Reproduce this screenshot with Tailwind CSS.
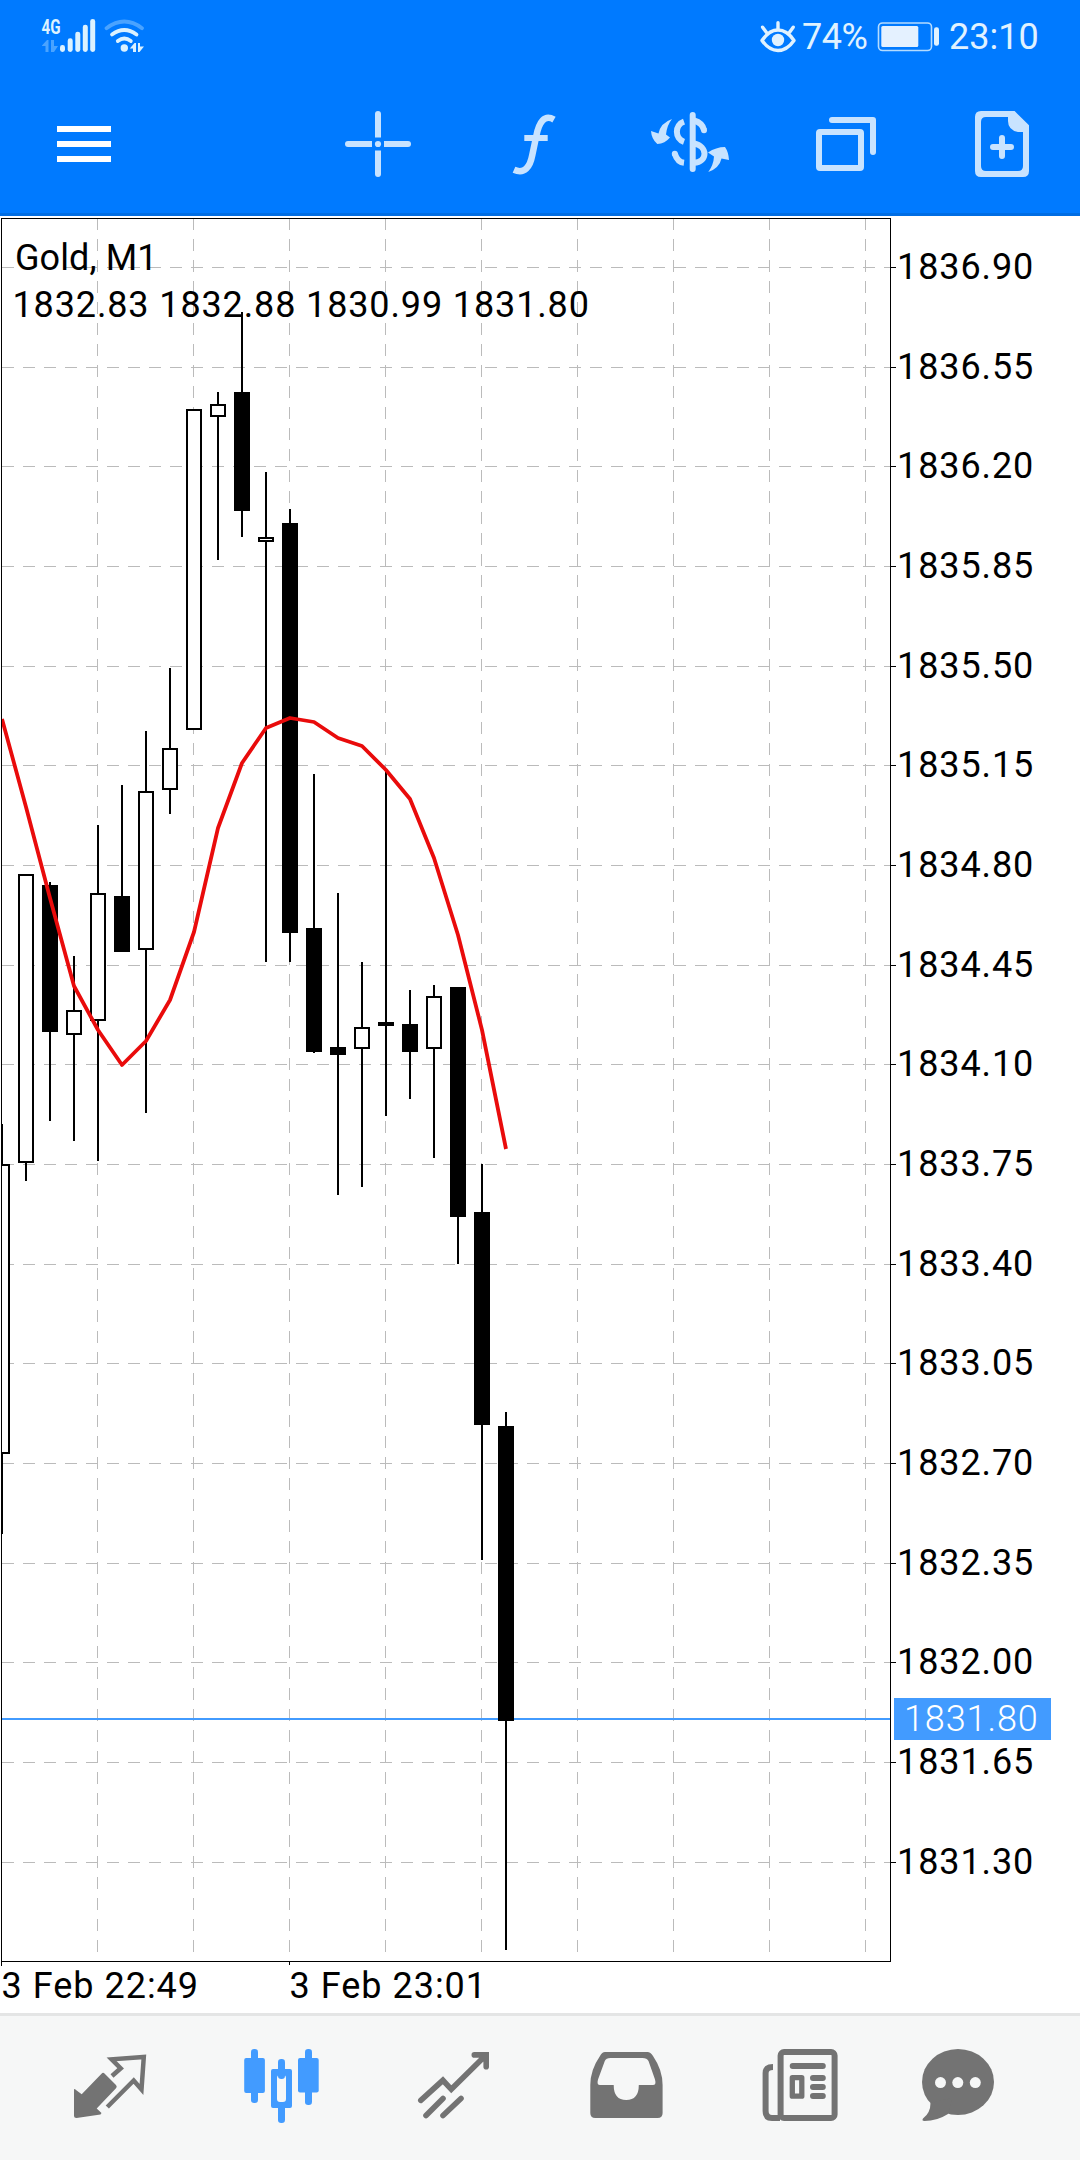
<!DOCTYPE html>
<html lang="en">
<head>
  <meta charset="UTF-8">
  <title>Gold, M1</title>
  <script src="https://cdn.jsdelivr.net/npm/@tailwindcss/browser@4"></script>
</head>
<body class="w-[1080px] h-[2160px] bg-white flex flex-col overflow-hidden font-[Roboto,sans-serif]">

  <!-- Header -->
  <header class="h-[216px] shrink-0 bg-[#007aff] border-b-[3px] border-[#006de3]">

    <!-- Status bar -->
    <div class="h-[72px] pt-4 pl-[38px] flex items-start text-[#e0f2ff] text-4xl leading-[42px]">
      <svg class="w-28 h-10" viewBox="38 16 112 40" fill="#dcf2ff">
        <text x="41.5" y="34" font-size="20.5" font-weight="700" textLength="19" lengthAdjust="spacingAndGlyphs">4G</text>
        <g fill="#4aa3ff">
          <path d="M42 45.5L47 40H48.5V52H45.5V46H42Z"/>
          <path d="M51 40H54V46H58L54 52H51Z"/>
        </g>
        <rect x="60" y="45" width="5" height="7" rx="2.4"/>
        <rect x="67.7" y="38.3" width="5" height="13.7" rx="2.4"/>
        <rect x="75.3" y="31.7" width="5" height="20.3" rx="2.4"/>
        <rect x="82.8" y="24.7" width="5" height="27.3" rx="2.4"/>
        <rect x="90.2" y="19" width="5" height="33" rx="2.4"/>
        <g fill="none" stroke="#dcf2ff" stroke-width="3.8" stroke-linecap="round">
          <path d="M106.5 28.2Q124.3 14.8 142 28.2" stroke="#4aa3ff"/>
          <path d="M112 34.5Q124.3 25.5 136.5 34.5"/>
          <path d="M117.8 41Q124.3 36 130.8 41"/>
        </g>
        <circle cx="124.3" cy="48" r="3.7"/>
        <path d="M129.8 48.5L134.5 43H136V52H133V48.5Z"/>
        <path d="M138 43H140V46.5H144L139.5 52H138Z"/>
      </svg>
      <svg class="w-10 h-10 ml-[608px]" viewBox="758 16 40 40" fill="none" stroke="#e0f2ff" stroke-width="3.4" stroke-linecap="round">
        <path d="M762 40.5Q769 30 778 30T794 40.5Q787 50.5 778 50.5T762 40.5Z" stroke-linejoin="round"/>
        <path d="M778 22.8V29M762.6 27.2L766.5 32.5M793.2 27.2L789.4 32.5"/>
        <circle cx="778" cy="40" r="6.2" fill="#e0f2ff" stroke="none"/>
      </svg>
      <span class="w-[78px] pl-1 tracking-[-0.5px]">74%</span>
      <svg class="w-16 h-10" viewBox="876 16 64 40">
        <rect x="878.5" y="23" width="53" height="27.5" rx="4" fill="none" stroke="#b5dcff" stroke-width="1.6"/>
        <rect x="881.3" y="26" width="37" height="21" rx="1.5" fill="#e4f1ff"/>
        <rect x="934" y="27.3" width="5" height="18.4" rx="2.2" fill="#e0f2ff"/>
      </svg>
      <span class="pl-[9px]">23:10</span>
    </div>

    <!-- Toolbar -->
    <div class="pt-[30px] pl-[42px] flex gap-[72px]">
      <svg class="w-[84px] h-[84px] mr-[138px]" viewBox="0 0 84 84" fill="#fff">
        <rect x="15" y="24" width="54" height="6"/>
        <rect x="15" y="39" width="54" height="6"/>
        <rect x="15" y="54" width="54" height="6"/>
      </svg>

      <!-- crosshair -->
      <svg class="w-[84px] h-[84px]" viewBox="0 0 84 84" fill="#c8e3ff">
        <path d="M39 35.5V12A3 3 0 0 1 45 12V35.5Z"/>
        <path d="M39 48.5V72A3 3 0 0 0 45 72V48.5Z"/>
        <path d="M36 39H12A3 3 0 0 0 12 45H36Z"/>
        <path d="M48 39H72A3 3 0 0 1 72 45H48Z"/>
        <circle cx="42" cy="42" r="3.1"/>
      </svg>

      <!-- indicators -->
      <svg class="w-[84px] h-[84px]" viewBox="0 0 84 84" fill="none" stroke="#c8e3ff" stroke-width="6.5">
        <path d="M62 17.6C52.500 12 47 20 44.300 34L40.300 53C38 65 32.500 72.500 22 67.800"/>
        <path d="M32.300 36H55.700" stroke-width="6"/>
      </svg>

      <!-- symbols -->
      <svg class="w-[84px] h-[84px]" viewBox="0 0 84 84">
        <g fill="none" stroke="#c8e3ff" stroke-width="6">
          <path d="M44.700 13V67" stroke-linecap="round"/>
          <path d="M36 19.700C26.500 23 26.500 36.500 36 39.800"/>
          <path d="M26.800 51.700Q29.500 60 36 60.800"/>
          <path d="M46 18.500Q54.500 21 56 28"/>
          <path d="M46 41.500C60 44 60 60 46 60.800"/>
        </g>
        <g fill="#c8e3ff">
          <circle cx="26.800" cy="51.700" r="3"/>
          <circle cx="56" cy="28.300" r="3"/>
          <path d="M24 17Q12.500 21 10.500 31.500L3 29Q3.500 37 9.300 42Q17 41.500 22 35.500L18 32.500Q19 23 24 17Z"/>
          <path d="M60.300 70Q65.500 63 66 54.500L60 50.500Q68 45 77 45Q80.500 50 81 58L73.500 56.500Q71.500 66 60.300 70Z"/>
        </g>
      </svg>

      <!-- windows -->
      <svg class="w-[84px] h-[84px]" viewBox="0 0 84 84" fill="none" stroke="#c8e3ff" stroke-width="6" stroke-linecap="round" stroke-linejoin="round">
        <rect x="15" y="30" width="42" height="36" rx="1"/>
        <path d="M28 18H69V50"/>
      </svg>

      <!-- new order -->
      <svg class="w-[84px] h-[84px]" viewBox="0 0 84 84">
        <path fill="#c8e3ff" fill-rule="evenodd" d="M21 9H54.600L69 23.300V69Q69 75 63 75H21Q15 75 15 69V15Q15 9 21 9ZM26 15Q21 15 21 20V64Q21 69 26 69H58Q63 69 63 64V30H58Q48 28 48 19V15Z"/>
        <path d="M42 36V54M33 45H51" stroke="#c8e3ff" stroke-width="6" stroke-linecap="round"/>
      </svg>
    </div>
  </header>

  <!-- Chart -->
  <main class="h-[1797px] shrink-0">
    <svg id="chart" class="block w-[1080px] h-[1797px]" viewBox="0 216 1080 1797" shape-rendering="crispEdges"></svg>
  </main>

  <!-- Bottom navigation -->
  <nav class="h-[147px] shrink-0 bg-[#f6f7f7] border-t-[3px] border-[#e4e5e5] pt-8 pl-[68px] grid grid-cols-[171px_172px_173px_174px_158px_84px] text-[#737373]">
    <svg class="w-[84px] h-[84px]" viewBox="0 0 84 84">
      <path fill="currentColor" d="M6 41.500Q6.500 40.500 8 42L13.700 46.300L33.500 25.700Q35 24 36.500 25.500L48 37Q49.500 38.700 48 40.300L28.700 60.500L33.500 65L32.500 66.500L8.500 70Q6 70 6 67.500Z"/>
      <path fill="none" stroke="currentColor" stroke-width="4.500" d="M44 28L52.700 20.300L43.700 11.300L75.800 9L73.500 41.500L65.700 32.500L39.300 59"/>
    </svg>
    <svg class="w-[84px] h-[84px] text-[#429bff]" viewBox="0 0 84 84" fill="currentColor">
      <rect x="12" y="1" width="7" height="54" rx="3.200"/>
      <rect x="5.200" y="10" width="20.700" height="35" rx="2"/>
      <rect x="39" y="11" width="7" height="20" rx="3.200"/>
      <rect x="39" y="56" width="7" height="19" rx="3.200"/>
      <path fill-rule="evenodd" d="M34 21H51Q53 21 53 23V58Q53 60 51 60H34Q32 60 32 58V23Q32 21 34 21ZM41 27Q38 27 38 30V51Q38 54 41 54H44Q47 54 47 51V30Q47 27 44 27Z"/>
      <rect x="66" y="1" width="7" height="56" rx="3.200"/>
      <rect x="59" y="10" width="20.700" height="34.500" rx="2"/>
    </svg>
    <svg class="w-[84px] h-[84px]" viewBox="0 0 84 84" fill="none" stroke="currentColor" stroke-width="5.600" stroke-linecap="round">
      <path d="M9.800 52.300L31.900 32.300L40.300 41.300L75 7M63.300 6.900H75.200V18.800"/>
      <path d="M15 67.500L32 50.500M32 67.500L50 50.500"/>
    </svg>
    <svg class="w-[84px] h-[84px]" viewBox="0 0 84 84" fill="currentColor">
      <path fill-rule="evenodd" d="M21 4H63.500Q66.500 4 69 8Q78.600 22 78.600 37V65Q78.600 70 73.600 70H11.300Q6.300 70 6.300 65V37Q6.300 22 16 8Q18 4 21 4ZM26.500 10Q22 10 20.800 13L14 31.500Q12.500 37 16 37H29.700Q29.700 52 42.200 52Q54.800 52 54.800 37H69Q72.500 37 71 31.500L64.500 13Q63 10 58.500 10Z"/>
    </svg>
    <svg class="w-[84px] h-[84px]" viewBox="0 0 84 84" fill="none" stroke="currentColor" stroke-width="6">
      <rect x="22.600" y="4" width="54" height="66" rx="3.500"/>
      <path d="M15 19Q7.600 19 7.600 25V63Q7.600 70 14 70H22"/>
      <path d="M34.700 18H64.800M55 30H64.800M55 39H64.800M55 48H64.800" stroke-linecap="round"/>
      <rect x="34.300" y="29.700" width="9.500" height="18.500" stroke-width="5.300" stroke-linejoin="round"/>
    </svg>
    <svg class="w-[84px] h-[84px]" viewBox="0 0 84 84" fill="currentColor">
      <ellipse cx="42" cy="34" rx="36" ry="33"/>
      <path d="M14.500 55Q14.500 65 7 70.500Q5.500 73 8.500 73Q21 73 32 66L36 50Z"/>
      <g fill="#f6f7f7">
        <circle cx="24.500" cy="34.600" r="5.500"/>
        <circle cx="41.800" cy="34.600" r="5.500"/>
        <circle cx="59.300" cy="34.600" r="5.500"/>
      </g>
    </svg>
  </nav>

  <script>
    // price levels: [label, y]
    const levels = [
      ["1836.90", 267], ["1836.55", 367], ["1836.20", 466], ["1835.85", 566], ["1835.50", 666],
      ["1835.15", 765], ["1834.80", 865], ["1834.45", 965], ["1834.10", 1064], ["1833.75", 1164],
      ["1833.40", 1264], ["1833.05", 1363], ["1832.70", 1463], ["1832.35", 1563], ["1832.00", 1662],
      ["1831.65", 1762], ["1831.30", 1862]
    ];

    // candles: [high, body top, body bottom, low, rising]
    const candles = [
      [1124, 1164, 1454, 1534, 1], [874, 874, 1163, 1181, 1], [882, 885, 1032, 1121, 0],
      [956, 1010, 1035, 1141, 1], [825, 893, 1021, 1161, 1], [785, 896, 952, 952, 0],
      [731, 791, 950, 1113, 1], [668, 748, 790, 814, 1], [409, 409, 730, 730, 1],
      [392, 404, 417, 560, 1], [312, 392, 511, 537, 0], [472, 537, 542, 962, 1],
      [509, 523, 933, 962, 0], [774, 928, 1052, 1053, 0], [893, 1047, 1055, 1195, 0],
      [962, 1027, 1049, 1187, 1], [770, 1022, 1026, 1116, 0], [990, 1024, 1052, 1099, 0],
      [985, 996, 1049, 1158, 1], [987, 987, 1217, 1264, 0], [1164, 1212, 1425, 1560, 0],
      [1412, 1426, 1721, 1950, 0]
    ];

    // moving average, one y per candle
    const average = [719, 807, 898, 986, 1030, 1065, 1041, 1000, 932, 828, 763, 728, 718, 722, 738, 746, 770, 799, 858, 935, 1030, 1149];

    const step = 24;
    let out = "";

    const label = (x, y, text, spacing, color, weight = 400) =>
      `<text x="${x}" y="${y}" font-size="36" font-weight="${weight}" letter-spacing="${spacing}" fill="${color}">${text}</text>`;

    // grid
    for (let x = 97; x < 890; x += 96) {
      out += `<path d="M${x + 0.5} 218V1961" stroke="#bbb" stroke-dasharray="12 9"/>`;
    }
    levels.forEach(([text, y]) => {
      out += `<path d="M2 ${y + 0.5}H890" stroke="#bbb" stroke-dasharray="12 9"/>`;
      out += `<path d="M890 ${y + 0.5}H896" stroke="#000"/>`;
      out += label(897, y + 12, text, 0.9, "#000");
    });

    out += label(15, 270, "Gold, M1", 0.1, "#000");
    out += label(12.5, 317, "1832.83 1832.88 1830.99 1831.80", 0.87, "#000");

    // current price line
    out += `<rect x="2" y="1718" width="889" height="2" fill="#429bff"/>`;

    // candles
    out += `<clipPath id="plot"><rect x="1" y="218" width="890" height="1744"/></clipPath><g clip-path="url(#plot)">`;
    candles.forEach(([high, top, bottom, low, rising], i) => {
      const c = 2 + i * step;
      out += `<rect x="${c - 1}" y="${high}" width="2" height="${low - high}" fill="#000"/>`;
      out += `<rect x="${c - 8}" y="${top}" width="16" height="${bottom - top}" fill="#000"/>`;
      if (rising) {
        out += `<rect x="${c - 6}" y="${top + 2}" width="12" height="${bottom - top - 4}" fill="#fff"/>`;
      }
    });
    out += `<polyline fill="none" stroke="#e90b0b" stroke-width="3.8" stroke-linejoin="round" shape-rendering="auto" points="${average.map((y, i) => `${2 + i * step},${y}`).join(" ")}"/></g>`;

    // frame
    out += `<path d="M1.5 1966V218.5H891M890.5 218V1961.5M1 1961.5H891M289.5 1961V1965" fill="none" stroke="#000"/>`;

    // current price badge
    out += `<rect x="894" y="1698" width="157" height="42" fill="#429bff"/>`;
    out += label(904, 1731, "1831.80", 0.9, "#fff", 300);

    // time axis
    out += label(1.5, 1998, "3 Feb 22:49", 1, "#000");
    out += label(289.5, 1998, "3 Feb 23:01", 1, "#000");

    document.getElementById("chart").innerHTML = out;
  </script>

</body>
</html>
